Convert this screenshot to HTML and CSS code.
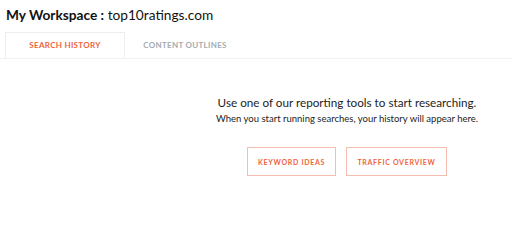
FILE: index.html
```html
<!DOCTYPE html>
<html lang="en">
<head>
  <meta charset="UTF-8">
  <title>My Workspace</title>
  <link rel="stylesheet" href="styles.css">
</head>
<body>
  <h1 class="titulo"><b>My Workspace :</b> top10ratings.com</h1>

  <div class="tabs">
    <div class="tab activa">SEARCH HISTORY</div>
    <div class="tab">CONTENT OUTLINES</div>
  </div>

  <div class="vacio">
    <div class="caja">
      <p class="lema">Use one of our reporting tools to start researching.</p>
      <p class="nota">When you start running searches, your history will appear here.</p>
      <div class="botones">
        <button class="btn">KEYWORD IDEAS</button>
        <button class="btn">TRAFFIC OVERVIEW</button>
      </div>
    </div>
  </div>
</body>
</html>
```

FILE: styles.css
```css
body {
  margin: 0;
  font-family: Lato, Arial, sans-serif;
  background-color: #fff;
  color: #1d1d1d;
}
.titulo {
  margin: 0;
  padding: 5px 6px 0;
  font-family: Lato, Arial, sans-serif;
  font-size: 13.7px;
  font-weight: normal;
  line-height: 20px;
  color: #111;
}
.titulo b {
  font-weight: 700;
}
.tabs {
  display: flex;
  margin-top: 7px;
  padding-left: 5px;
  border-bottom: 1px solid #f2f2f2;
}
.tab {
  width: 118px;
  height: 25px;
  line-height: 25px;
  text-align: center;
  font-family: Lato, Arial, sans-serif;
  font-size: 8px;
  font-weight: 700;
  letter-spacing: 0.3px;
  color: #a4abaf;
  border: 1px solid transparent;
  border-bottom: none;
}
.tab.activa {
  color: #f0643c;
  border-color: #eeeeee;
  margin-bottom: -1px;
  background-color: #fff;
}
.vacio {
  display: flex;
  padding-left: 182px;
  padding-top: 35px;
}
.caja {
  width: 330px;
  text-align: center;
}
.lema {
  margin: 0;
  font-size: 11.7px;
  line-height: 17px;
}
.nota {
  margin: 1px 0 0;
  font-size: 9.5px;
  line-height: 14px;
}
.botones {
  display: flex;
  justify-content: center;
  gap: 10px;
  margin-top: 21px;
}
.btn {
  height: 29px;
  padding: 0;
  white-space: nowrap;
  font-family: Lato, Arial, sans-serif;
  font-size: 7px;
  font-weight: 700;
  letter-spacing: 0.7px;
  color: #f0643c;
  background-color: #fff;
  border: 1px solid #f5bcb2;
  border-radius: 0;
}
.btn:first-child {
  width: 89px;
}
.btn:last-child {
  width: 101px;
}
```
